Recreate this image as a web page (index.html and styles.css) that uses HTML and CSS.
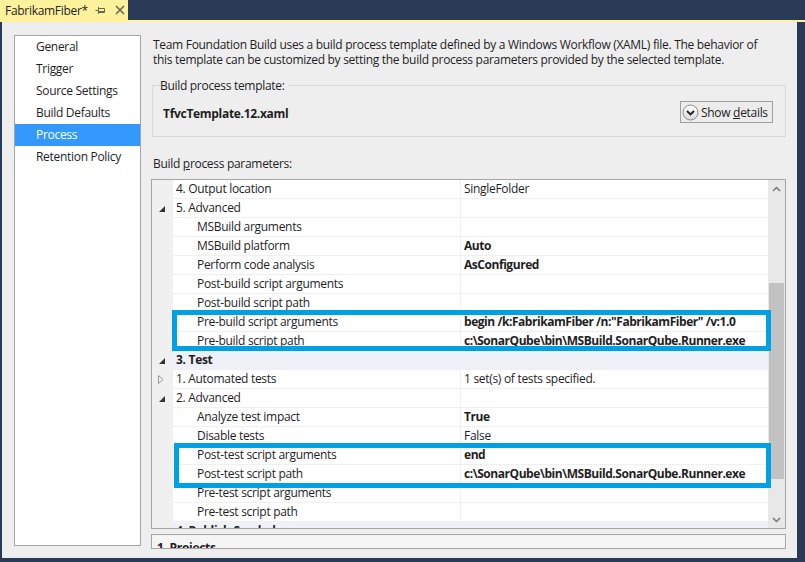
FILE: index.html
```html
<!DOCTYPE html>
<html>
<head>
<meta charset="utf-8">
<link rel="stylesheet" href="styles.css">
</head>
<body>
<div class="tabbar">
  <div class="tab">
    <span class="tab-title">FabrikamFiber*</span>
    <svg class="pin" width="11" height="9" viewBox="0 0 11 9"><path d="M0.5 4.5H3.5M3.5 1V8M3.5 2.5H9.5V6.5H3.5M3.5 5.5H9.5" fill="none" stroke="#6b6650" stroke-width="1"/></svg>
    <svg class="close" width="10" height="10" viewBox="0 0 10 10"><path d="M1 1L9 9M9 1L1 9" stroke="#6b6650" stroke-width="1.6"/></svg>
  </div>
</div>
<div class="tabline"></div>
<div class="main">
  <ul class="nav">
    <li>General</li>
    <li>Trigger</li>
    <li>Source Settings</li>
    <li>Build Defaults</li>
    <li class="sel">Process</li>
    <li>Retention Policy</li>
  </ul>
  <div class="content">
    <p class="desc">Team Foundation Build uses a build process template defined by a Windows Workflow (XAML) file. The behavior of<br>this template can be customized by setting the build process parameters provided by the selected template.</p>
    <fieldset class="group">
      <legend>Build process template:</legend>
      <div class="group-row">
        <span class="tpl">TfvcTemplate.12.xaml</span>
        <button class="btn"><svg width="17" height="17" viewBox="0 0 17 17"><defs><linearGradient id="g" x1="0" y1="0" x2="0" y2="1"><stop offset="0" stop-color="#ffffff"/><stop offset="1" stop-color="#d8d8d8"/></linearGradient></defs><circle cx="8.5" cy="8.5" r="7.5" fill="url(#g)" stroke="#8a8a8a"/><path d="M5 7L8.5 10.5L12 7" fill="none" stroke="#202020" stroke-width="1.8"/></svg><span>Show <u>d</u>etails</span></button>
      </div>
    </fieldset>
    <div class="params-label">Build <u>p</u>rocess parameters:</div>
    <div class="grid">
      <div class="grid-body">
        <div class="row"><div class="gut"></div><div class="name l1">4. Output location</div><div class="val">SingleFolder</div></div>
        <div class="row"><div class="gut"><svg class="exp" width="6" height="6" viewBox="0 0 6 6"><path d="M6 0V6H0Z" fill="#333"/></svg></div><div class="name l1">5. Advanced</div><div class="val"></div></div>
        <div class="row"><div class="gut"></div><div class="name l2">MSBuild arguments</div><div class="val"></div></div>
        <div class="row"><div class="gut"></div><div class="name l2">MSBuild platform</div><div class="val b">Auto</div></div>
        <div class="row"><div class="gut"></div><div class="name l2">Perform code analysis</div><div class="val b">AsConfigured</div></div>
        <div class="row"><div class="gut"></div><div class="name l2">Post-build script arguments</div><div class="val"></div></div>
        <div class="row"><div class="gut"></div><div class="name l2">Post-build script path</div><div class="val"></div></div>
        <div class="row"><div class="gut"></div><div class="name l2">Pre-build script arguments</div><div class="val b">begin /k:FabrikamFiber /n:"FabrikamFiber" /v:1.0</div></div>
        <div class="row"><div class="gut"></div><div class="name l2">Pre-build script path</div><div class="val b">c:\SonarQube\bin\MSBuild.SonarQube.Runner.exe</div></div>
        <div class="row cat"><div class="gut"><svg class="exp" width="6" height="6" viewBox="0 0 6 6"><path d="M6 0V6H0Z" fill="#333"/></svg></div><div class="name l1 b">3. Test</div><div class="val"></div></div>
        <div class="row"><div class="gut"><svg class="col" width="6" height="9" viewBox="0 0 6 9"><path d="M0.5 0.5L5 4.5L0.5 8.5Z" fill="none" stroke="#9a9a9a"/></svg></div><div class="name l1">1. Automated tests</div><div class="val">1 set(s) of tests specified.</div></div>
        <div class="row"><div class="gut"><svg class="exp" width="6" height="6" viewBox="0 0 6 6"><path d="M6 0V6H0Z" fill="#333"/></svg></div><div class="name l1">2. Advanced</div><div class="val"></div></div>
        <div class="row"><div class="gut"></div><div class="name l2">Analyze test impact</div><div class="val b">True</div></div>
        <div class="row"><div class="gut"></div><div class="name l2">Disable tests</div><div class="val">False</div></div>
        <div class="row"><div class="gut"></div><div class="name l2">Post-test script arguments</div><div class="val b">end</div></div>
        <div class="row"><div class="gut"></div><div class="name l2">Post-test script path</div><div class="val b">c:\SonarQube\bin\MSBuild.SonarQube.Runner.exe</div></div>
        <div class="row"><div class="gut"></div><div class="name l2">Pre-test script arguments</div><div class="val"></div></div>
        <div class="row"><div class="gut"></div><div class="name l2">Pre-test script path</div><div class="val"></div></div>
        <div class="row cat"><div class="gut"><svg class="exp" width="6" height="6" viewBox="0 0 6 6"><path d="M6 0V6H0Z" fill="#333"/></svg></div><div class="name l1 b">4. Publish Symbols</div><div class="val"></div></div>
      </div>
      <div class="vscroll">
        <div class="sbtn"><svg width="9" height="6" viewBox="0 0 9 6"><path d="M1 5L4.5 1.5L8 5" fill="none" stroke="#777" stroke-width="1.5"/></svg></div>
        <div class="track"><div class="thumb"></div></div>
        <div class="sbtn"><svg width="9" height="6" viewBox="0 0 9 6"><path d="M1 1L4.5 4.5L8 1" fill="none" stroke="#777" stroke-width="1.5"/></svg></div>
      </div>
      <div class="hl hl1"></div>
      <div class="hl hl2"></div>
    </div>
    <div class="desc-box"><span class="b">1. Projects</span></div>
  </div>
</div>
</body>
</html>
```
FILE: styles.css
```css
* { box-sizing: border-box; }
html, body { margin: 0; padding: 0; }
body {
  width: 805px;
  height: 562px;
  overflow: hidden;
  background: #293a56;
  font-family: "Open Sans", "Noto Sans", sans-serif;
  font-size: 12px;
  letter-spacing: -0.3px;
  color: #1e1e1e;
}
.tabbar { height: 20px; display: flex; }
.tab {
  width: 128px;
  background: #fff29d;
  display: flex;
  align-items: center;
  padding-left: 5px;
}
.tab-title { color: #1e1e1e; }
.pin { margin-left: 7px; }
.close { margin-left: 9px; }
.tabline { height: 2px; background: #fff29d; }
.main {
  margin: 0 8px 0 2px;
  height: 536px;
  background: #eeeeee;
  display: flex;
  padding: 13px 11px 0 12px;
}
.nav {
  list-style: none;
  margin: 0;
  padding: 0;
  width: 127px;
  height: 511px;
  background: #fff;
  border: 1px solid #a5a5a5;
}
.nav li {
  height: 22px;
  line-height: 21px;
  padding-left: 21px;
}
.nav li.sel { background: #3399ff; color: #fff; }
.content {
  margin-left: 10px;
  width: 635px;
  display: flex;
  flex-direction: column;
}
.desc {
  margin: 2px 0 0 2px;
  line-height: 15px;
}
.group {
  margin: 11px 0 0 1px;
  padding: 0 0 0 10px;
  border: 1px solid #d8d8d8;
  height: 59px;
  min-width: 0;
}
.group legend {
  padding: 0 3px 0 0;
  margin-left: -3px;
  line-height: 15px;
}
.group-row {
  display: flex;
  align-items: center;
  justify-content: space-between;
  margin-top: 8px;
  padding-right: 12px;
}
.tpl { font-weight: bold; padding-top: 3px; }
.b { font-weight: bold; }
.val.b { letter-spacing: -0.45px; }
.btn {
  width: 93px;
  height: 22px;
  border: 1px solid #a0a0a0;
  background: #ececec;
  font: inherit;
  letter-spacing: inherit;
  color: #1e1e1e;
  display: flex;
  align-items: center;
  padding: 0 0 0 1px;
  gap: 2px;
}
.btn svg { flex: none; }
.params-label {
  margin: 19px 0 0 2px;
  line-height: 15px;
  height: 15px;
}
.grid {
  position: relative;
  margin-top: 8px;
  height: 350px;
  border: 1px solid #a5a5a5;
  background: #fff;
  display: flex;
}
.grid-body {
  width: 616px;
  overflow: hidden;
}
.row { display: flex; height: 19px; }
.gut {
  width: 21px;
  flex: none;
  background: #f0f0f0;
  display: flex;
  align-items: center;
  padding-left: 7px;
}
.name, .val {
  border-bottom: 1px solid #f0f0f0;
  line-height: 18px;
  white-space: nowrap;
  overflow: hidden;
}
.name { width: 288px; flex: none; border-right: 1px solid #f0f0f0; }
.val { flex: 1; padding-left: 3px; }
.l1 { padding-left: 3px; }
.l2 { padding-left: 24px; }
.cat .name, .cat .val { background: #eef1f7; }
.exp { margin-top: 1px; }
.col { margin-left: -1px; }
.vscroll {
  width: 17px;
  background: #e8e8e8;
  display: flex;
  flex-direction: column;
}
.sbtn {
  height: 17px;
  display: flex;
  align-items: center;
  justify-content: center;
}
.track { flex: 1; padding: 86px 1px 0 1px; }
.thumb { height: 196px; background: #c2c2c2; }
.hl {
  position: absolute;
  border: 5px solid #00a0e4;
}
.hl1 { left: 20px; top: 130px; width: 599px; height: 41px; }
.hl2 { left: 22px; top: 263px; width: 597px; height: 45px; }
.desc-box {
  margin-top: 5px;
  height: 15px;
  border: 1px solid #a5a5a5;
  background: #f5f5f5;
  overflow: hidden;
  padding-left: 5px;
  line-height: 26px;
}
```
